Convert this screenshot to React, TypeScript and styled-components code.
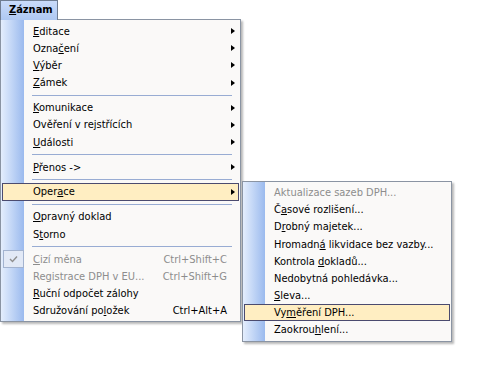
import React from "react";
import styled, { createGlobalStyle, css } from "styled-components";

const GlobalStyle = createGlobalStyle`
  html, body { margin: 0; padding: 0; background: #ffffff; }
  body {
    font-family: "DejaVu Sans Condensed", "DejaVu Sans", sans-serif;
    font-stretch: condensed;
    font-size: 11px;
    color: #000;
  }
`;

type Entry =
  | { sep: true }
  | {
      sep?: false;
      label: string;
      arrow?: boolean;
      shortcut?: string;
      disabled?: boolean;
      checked?: boolean;
      active?: boolean;
      sub?: boolean;
    };

const mainItems: Entry[] = [
  { label: "&Editace", arrow: true },
  { label: "Ozna&čení", arrow: true },
  { label: "&Výběr", arrow: true },
  { label: "&Zámek", arrow: true },
  { sep: true },
  { label: "&Komunikace", arrow: true },
  { label: "Ověření v rejstřících", arrow: true },
  { label: "&Události", arrow: true },
  { sep: true },
  { label: "&Přenos ->", arrow: true },
  { sep: true },
  { label: "Oper&ace", arrow: true, active: true, sub: true },
  { sep: true },
  { label: "&Opravný doklad" },
  { label: "S&torno" },
  { sep: true },
  { label: "&Cizí měna", shortcut: "Ctrl+Shift+C", disabled: true, checked: true },
  { label: "Registrace DPH v EU...", shortcut: "Ctrl+Shift+G", disabled: true },
  { label: "&Ruční odpočet zálohy" },
  { label: "Sdružování po&ložek", shortcut: "Ctrl+Alt+A" },
];

const subItems: Entry[] = [
  { label: "Aktualizace sazeb DPH...", disabled: true },
  { label: "Č&asové rozlišení..." },
  { label: "D&robný majetek..." },
  { label: "Hromadn&á likvidace bez vazby..." },
  { label: "Kontrola &dokladů..." },
  { label: "Nedobytná pohledávka..." },
  { label: "&Sleva..." },
  { label: "Vy&měření DPH...", active: true },
  { label: "Zaokrou&hlení..." },
];

const Page = styled.div`
  position: relative;
  width: 500px;
  height: 379px;
`;

const MenuHeader = styled.div`
  position: relative;
  z-index: 2;
  box-sizing: border-box;
  width: 58px;
  height: 20px;
  margin-bottom: -1px;
  padding-left: 8px;
  border: 1px solid #6f7d92;
  border-bottom: none;
  background: linear-gradient(to bottom, #c9dbfa, #aec8f2);
  font-weight: bold;
  line-height: 18px;
`;

const MenuPanel = styled.div<{ $width: number; $strip: number; $padTop: number }>`
  position: relative;
  box-sizing: border-box;
  width: ${(p) => p.$width}px;
  padding: ${(p) => p.$padTop}px 0 2px;
  border: 1px solid #8a94a3;
  background:
    linear-gradient(to right, #e4eefd, #9bbaee) 0 0 / ${(p) => p.$strip}px 100% no-repeat,
    #faf9f8;
  box-shadow: 2px 2px 2px rgba(0, 0, 0, 0.28);
`;

const SubPanel = styled(MenuPanel)`
  position: absolute;
  left: 239px;
  top: -3px;
  z-index: 3;
`;

const Item = styled.div<{ $active?: boolean; $disabled?: boolean }>`
  position: relative;
  box-sizing: border-box;
  display: flex;
  align-items: center;
  height: 17.2px;
  margin: 0 1px;
  border: 1px solid transparent;
  color: ${(p) => (p.$disabled ? "#8d8d8d" : "#000")};
  white-space: nowrap;
  ${(p) =>
    p.$active &&
    css`
      border-color: #4b4b6f;
      background: #ffeec2;
    `}
`;

const IconCell = styled.div<{ $w: number }>`
  flex: none;
  width: ${(p) => p.$w}px;
  height: 100%;
  display: flex;
  align-items: center;
  justify-content: center;
`;

const CheckBox = styled.div`
  box-sizing: border-box;
  width: 21px;
  height: 18px;
  margin-left: -1px;
  border: 1px solid #a3b3cf;
  background: #e2e9f6;
  display: flex;
  align-items: center;
  justify-content: center;
`;

const Label = styled.span`
  flex: 1;
  padding-left: 8px;
`;

const Shortcut = styled.span`
  flex: none;
  text-align: right;
`;

const ArrowCell = styled.span`
  flex: none;
  width: 11px;
  height: 100%;
  display: flex;
  align-items: center;
  padding-left: 4px;
  box-sizing: border-box;
`;

const Triangle = styled.span`
  width: 0;
  height: 0;
  border-top: 3.5px solid transparent;
  border-bottom: 3.5px solid transparent;
  border-left: 4px solid #000;
`;

const Separator = styled.div`
  height: 7.8px;
  display: flex;
  align-items: center;
  padding-left: 31px;
  padding-right: 8px;
`;

const SepLine = styled.div`
  flex: 1;
  height: 1px;
  background: #98acd3;
`;

const Mnemonic = styled.span`
  text-decoration: underline;
  text-underline-offset: 1px;
`;

function renderLabel(text: string) {
  const i = text.indexOf("&");
  if (i < 0) return text;
  return (
    <>
      {text.slice(0, i)}
      <Mnemonic>{text.charAt(i + 1)}</Mnemonic>
      {text.slice(i + 2)}
    </>
  );
}

const Check = () => (
  <svg width="9" height="8" viewBox="0 0 9 8">
    <path d="M1 4 L3.5 6.5 L8 1.5" fill="none" stroke="#8f8f8f" strokeWidth="1.4" />
  </svg>
);

function MenuList({ items, iconW, sub }: { items: Entry[]; iconW: number; sub?: React.ReactNode }) {
  return (
    <>
      {items.map((it, idx) => {
        if (it.sep) {
          return (
            <Separator key={idx}>
              <SepLine />
            </Separator>
          );
        }
        return (
          <Item key={idx} $active={it.active} $disabled={it.disabled}>
            <IconCell $w={iconW}>{it.checked && <CheckBox><Check /></CheckBox>}</IconCell>
            <Label>{renderLabel(it.label)}</Label>
            {it.shortcut && <Shortcut>{it.shortcut}</Shortcut>}
            <ArrowCell>{it.arrow && <Triangle />}</ArrowCell>
            {it.sub && sub}
          </Item>
        );
      })}
    </>
  );
}

export default function App() {
  return (
    <Page>
      <GlobalStyle />
      <MenuHeader>{renderLabel("&Záznam")}</MenuHeader>
      <MenuPanel $width={241} $strip={23} $padTop={2.5}>
        <MenuList
          items={mainItems}
          iconW={22}
          sub={
            <SubPanel $width={210} $strip={22} $padTop={1.5}>
              <MenuList items={subItems} iconW={21} />
            </SubPanel>
          }
        />
      </MenuPanel>
    </Page>
  );
}
